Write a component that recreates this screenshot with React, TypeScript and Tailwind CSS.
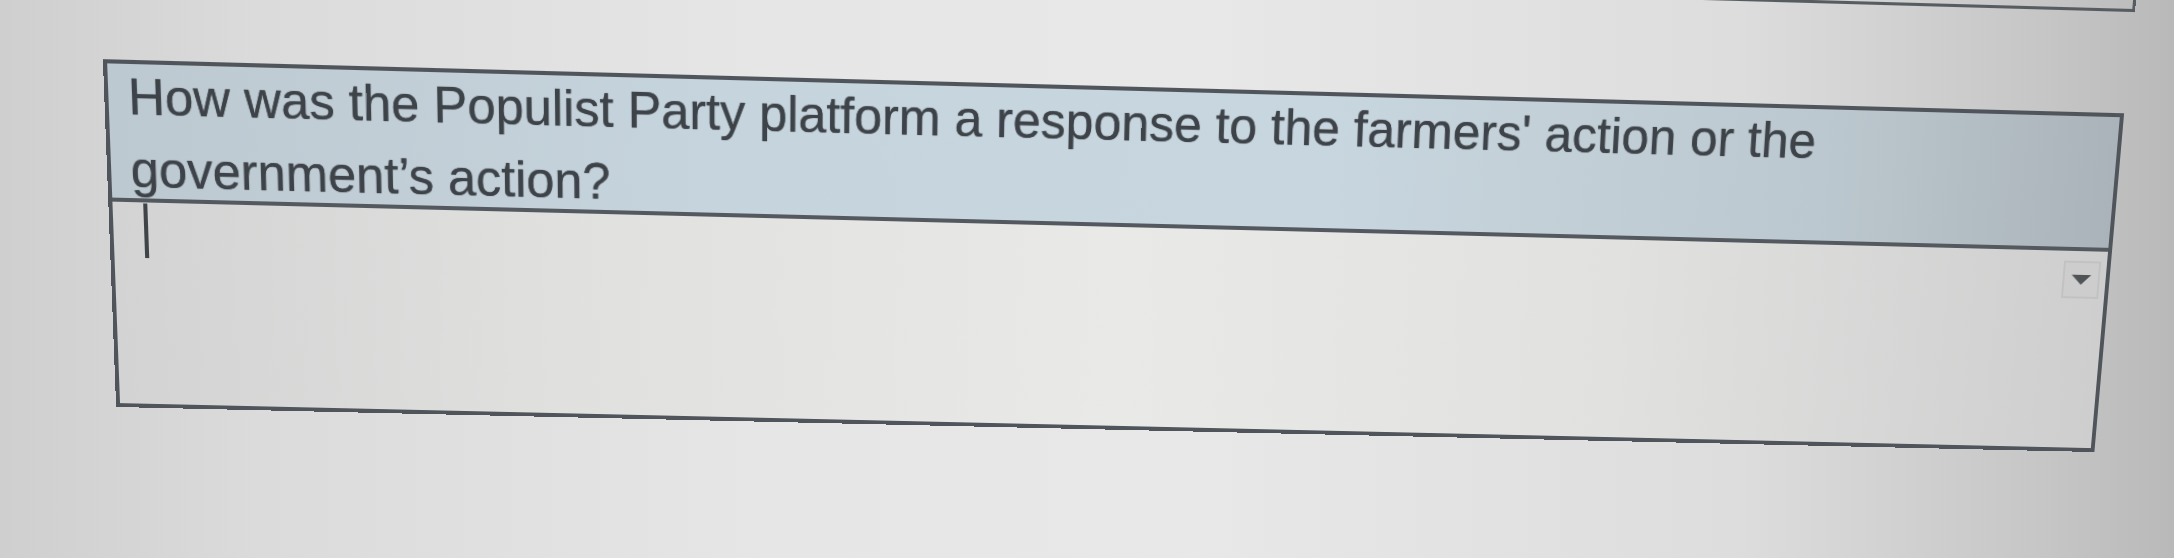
import React from "react";

// Free-response question card, shown as it appears on a tilted monitor.
export default function App() {
  return (
    <div className="h-[558px] w-full overflow-hidden bg-[linear-gradient(90deg,#cfcfcf_0%,#dbdbdb_12%,#e6e6e6_35%,#e8e8e8_55%,#dddddd_80%,#c6c6c6_94%,#b9b9b9_100%)] font-['Liberation_Sans',Arial,sans-serif]">
      <div className="-mt-[72px] ml-[121px] flex w-[2000px] origin-[1000px_332px] flex-col [transform:perspective(1000px)_rotate(1.46deg)_rotateX(-3.6deg)_rotateY(0.67deg)]">
        {/* bottom edge of the previous item */}
        <div className="-mr-[2px] mb-[100px] h-[60px] border-x-[3px] border-b-[3px] border-[#565c60]" />

        {/* question card */}
        <div className="flex h-[344px] flex-col border-[4px] border-[#4f555a]">
          <div className="h-[135px] border-b-[4px] border-[#53595e] bg-[linear-gradient(90deg,#bdc9d1_0%,#c6d4dd_30%,#c8d6df_60%,#bcc8cf_85%,#aab3b9_100%)] px-[19px]">
            <p className="-mt-[4px] text-[49.5px] leading-[71px] text-[#3d4348] [text-shadow:0_0_1px_#3d4348]">
              <span className="block whitespace-nowrap">
                How was the Populist Party platform a response to the farmers' action or the
              </span>
              <span className="block whitespace-nowrap">government’s action?</span>
            </p>
          </div>

          <div className="flex flex-1 items-start justify-between bg-[linear-gradient(90deg,#d2d3d2_0%,#e0e1df_22%,#e9eae8_50%,#e1e2e0_75%,#cecece_100%)] pl-[30px] pr-[6px]">
            <span className="mt-[1px] h-[54px] w-[4px] bg-[#3f4448]" />
            <button
              type="button"
              className="mt-[10px] flex h-[38px] w-[38px] items-center justify-center border-2 border-[#c2c2c2] bg-[#cdcdcd]"
            >
              <svg width="22" height="12" viewBox="0 0 22 12">
                <path d="M1 1 L21 1 L11 11 Z" fill="#505457" />
              </svg>
            </button>
          </div>
        </div>
      </div>
    </div>
  );
}
